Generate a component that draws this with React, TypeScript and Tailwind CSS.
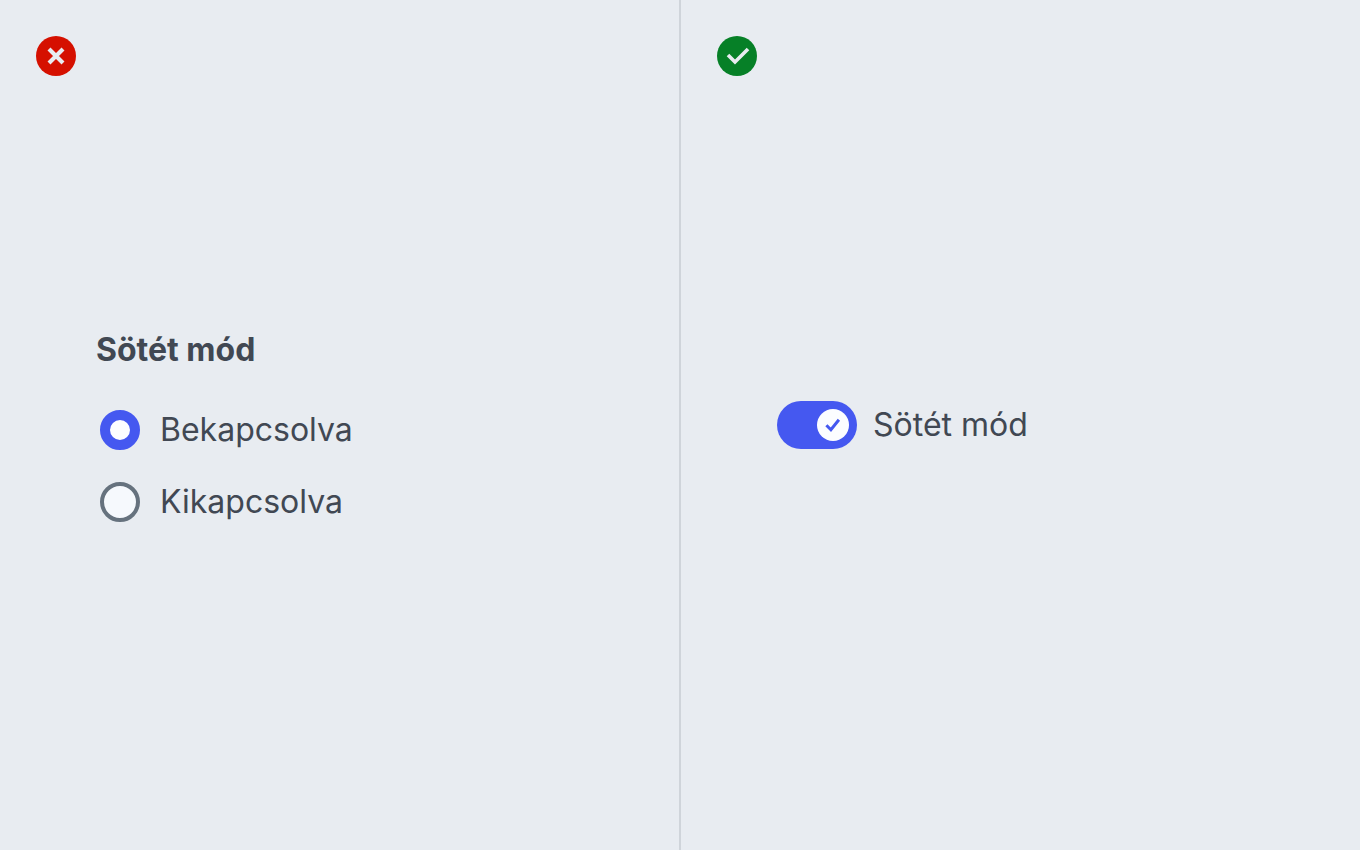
import React, { useState } from 'react';

function RadioOption({ label, checked, onChange }: { label: string; checked: boolean; onChange: () => void }) {
  return (
    <label className="flex h-12 items-center gap-5 pl-1">
      <input
        type="radio"
        name="theme"
        checked={checked}
        onChange={onChange}
        className="size-10 shrink-0 appearance-none rounded-full border-4 border-[#66727e] bg-[#f6f9fd] checked:border-10 checked:border-[#4558f0] checked:bg-[#fcfdff]"
      />
      <span>{label}</span>
    </label>
  );
}

function ThemeSwitch() {
  const [on, setOn] = useState(true);

  return (
    <div className="flex items-center gap-4">
      <button
        type="button"
        role="switch"
        id="theme-switch"
        aria-checked={on}
        onClick={() => setOn(!on)}
        className={
          on
            ? 'flex h-12 w-20 items-center justify-end rounded-full bg-[#4558f0] p-2'
            : 'flex h-12 w-20 items-center justify-start rounded-full bg-[#66727e] p-2'
        }
      >
        <span className="flex size-8 items-center justify-center rounded-full bg-[#fcfdff]">
          {on && (
            <svg viewBox="0 0 32 32" className="size-8" fill="none" stroke="#4558f0" strokeWidth="3">
              <path d="M9.4 16.2 13.9 20.8 21.9 10.7" />
            </svg>
          )}
        </span>
      </button>
      <label htmlFor="theme-switch">Sötét mód</label>
    </div>
  );
}

export default function App() {
  const [dark, setDark] = useState(true);

  return (
    <main className="grid min-h-screen grid-cols-2 bg-[#e8ecf1] font-['Inter',sans-serif] text-[32px] leading-12 text-[#414853]">
      <section className="relative flex items-center border-r border-[#cfd4da] px-24">
        <svg viewBox="0 0 40 40" className="absolute top-9 left-9 size-10" role="img" aria-label="Don't">
          <circle cx="20" cy="20" r="20" fill="#d51000" />
          <path d="m13 13 14 14m0-14L13 27" stroke="#e8ecf1" strokeWidth="4.2" />
        </svg>
        <fieldset>
          <legend className="mb-[30px] leading-[52px] font-bold">Sötét mód</legend>
          <div className="flex flex-col gap-6">
            <RadioOption label="Bekapcsolva" checked={dark} onChange={() => setDark(true)} />
            <RadioOption label="Kikapcsolva" checked={!dark} onChange={() => setDark(false)} />
          </div>
        </fieldset>
      </section>
      <section className="relative flex items-center border-l border-[#cfd4da] px-24">
        <svg viewBox="0 0 40 40" className="absolute top-9 left-9 size-10" role="img" aria-label="Do">
          <circle cx="20" cy="20" r="20" fill="#068027" />
          <path d="m11 19 7 7L31 13" fill="none" stroke="#e8ecf1" strokeWidth="3.6" />
        </svg>
        <ThemeSwitch />
      </section>
    </main>
  );
}
